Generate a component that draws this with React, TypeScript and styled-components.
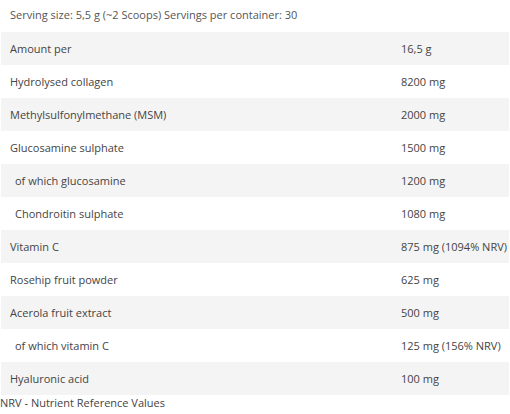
import React from 'react'
import styled, { createGlobalStyle } from 'styled-components'

const GlobalStyle = createGlobalStyle`
	html, body {
		margin: 0;
		padding: 0;
		background: #fff;
	}
	body {
		font-family: 'Open Sans', 'Noto Sans', sans-serif;
		color: #444;
	}
`

const Page = styled.div`
	width: 510px;
	display: flex;
	flex-direction: column;
`

const Serving = styled.p`
	margin: 0;
	height: 32px;
	line-height: 30px;
	padding-left: 10px;
	font-size: 11px;
	color: #555;
`

const Table = styled.div`
	margin-left: 1px;
	width: 508px;
	display: flex;
	flex-direction: column;
`

const Row = styled.div<{ $striped: boolean }>`
	display: grid;
	grid-template-columns: 400px 1fr;
	height: 33px;
	align-items: center;
	font-size: 11px;
	color: #444;
	background: ${(p) => (p.$striped ? '#f4f4f4' : '#fff')};
`

const Name = styled.span<{ $indent: boolean }>`
	padding-left: ${(p) => (p.$indent ? '14px' : '9px')};
`

const Value = styled.span``

const Note = styled.p`
	margin: 0;
	padding-top: 1px;
	font-size: 11px;
	line-height: 14px;
	color: #444;
`

const rows: [string, string, boolean?][] = [
	['Amount per', '16,5 g'],
	['Hydrolysed collagen', '8200 mg'],
	['Methylsulfonylmethane (MSM)', '2000 mg'],
	['Glucosamine sulphate', '1500 mg'],
	['of which glucosamine', '1200 mg', true],
	['Chondroitin sulphate', '1080 mg', true],
	['Vitamin C', '875 mg (1094% NRV)'],
	['Rosehip fruit powder', '625 mg'],
	['Acerola fruit extract', '500 mg'],
	['of which vitamin C', '125 mg (156% NRV)', true],
	['Hyaluronic acid', '100 mg'],
]

export default function App() {
	return (
		<>
			<GlobalStyle />
			<Page>
				<Serving>Serving size: 5,5 g (~2 Scoops) Servings per container: 30</Serving>
				<Table>
					{rows.map(([name, value, indent], i) => (
						<Row key={name} $striped={i % 2 === 0}>
							<Name $indent={!!indent}>{name}</Name>
							<Value>{value}</Value>
						</Row>
					))}
				</Table>
				<Note>NRV - Nutrient Reference Values</Note>
			</Page>
		</>
	)
}
